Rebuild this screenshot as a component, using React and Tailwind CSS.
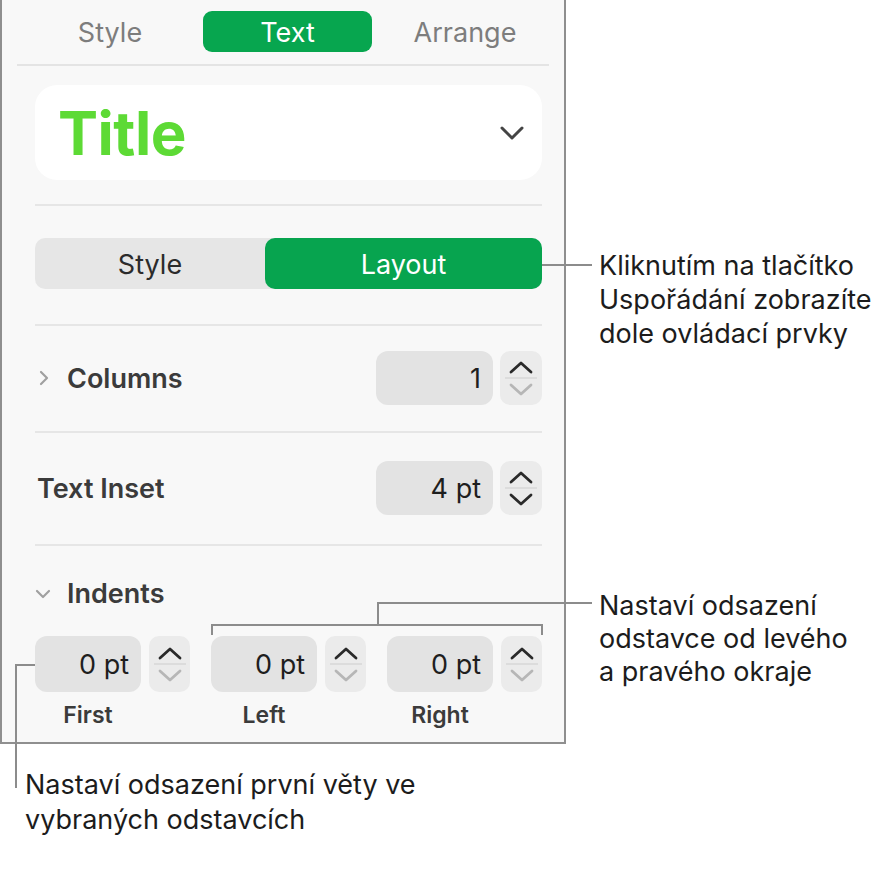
import React from "react";

const font = { fontFamily: "Inter, 'Noto Sans', sans-serif" };

function Chevron({ dir = "up", color = "#333", w = 22, h = 12, sw = 2.6 }) {
    const d = dir === "up" ? `M2 ${h - 2} L${w / 2} 2 L${w - 2} ${h - 2}` : `M2 2 L${w / 2} ${h - 2} L${w - 2} 2`;
    return (
        <svg width={w} height={h} viewBox={`0 0 ${w} ${h}`} fill="none">
            <path d={d} stroke={color} strokeWidth={sw} strokeLinecap="round" strokeLinejoin="round" />
        </svg>
    );
}

function Stepper({ downDisabled, w = "w-[42px]", h = "h-[54px]" }) {
    return (
        <div className={`${w} ${h} bg-[#ebebeb] rounded-[10px] flex flex-col items-center justify-center`}>
            <div className="h-[22px] flex items-end pb-[3px]">
                <Chevron dir="up" color="#2a2a2a" w={24} h={13} sw={2.8} />
            </div>
            <div className="w-[32px] h-[2px] bg-[#dcdcdc]" />
            <div className="h-[22px] flex items-start pt-[4px]">
                <Chevron dir="down" color={downDisabled ? "#b6b6b6" : "#2a2a2a"} w={24} h={13} sw={2.8} />
            </div>
        </div>
    );
}

function Field({ value, w = "w-[117px]", h = "h-[54px]" }) {
    return (
        <div className={`${w} ${h} bg-[#e3e3e3] rounded-[12px] flex items-center justify-end pr-[12px] pt-[2px] text-[27px] leading-[34px] text-[#1e1e1e]`}>
            {value}
        </div>
    );
}

function Sep() {
    return <div className="h-[2px] bg-[#e6e6e6]" />;
}

export default function App() {
    return (
        <div className="relative w-[892px] h-[873px] bg-white overflow-hidden" style={font}>
            {/* inspector panel */}
            <div className="w-[566px] h-[744px] bg-[#f8f8f8] border-l-2 border-r-2 border-b-2 border-[#8f8f8f] pl-[33px] pr-[22px]">
                {/* top tabs */}
                <div className="-ml-[35px] -mr-[24px] pt-[11px]">
                    <div className="h-[41px] flex items-center pl-[25px] text-[27px] leading-[34px]">
                        <div className="w-[170px] pt-[2px] text-center text-[#7d7d7d]">Style</div>
                        <div className="ml-[8px] w-[169px] h-[41px] pt-[2px] rounded-[9px] bg-[#07a64f] text-white flex items-center justify-center">Text</div>
                        <div className="w-[186px] pt-[2px] text-center text-[#7d7d7d]">Arrange</div>
                    </div>
                    <div className="mt-[12px] mx-[17px] h-[2px] bg-[#e4e4e4]" />
                </div>

                {/* paragraph style */}
                <div className="mt-[19px] h-[95px] bg-white rounded-[22px] flex items-center justify-between pl-[23px] pr-[18px]">
                    <span className="text-[60px] font-bold text-[#5dda35] tracking-[-0.5px] leading-none">Title</span>
                    <Chevron dir="down" color="#444" w={24} h={14} sw={3} />
                </div>

                <div className="mt-[24px]"><Sep /></div>

                {/* style / layout segment */}
                <div className="mt-[32px] h-[51px] bg-[#e6e6e6] rounded-[10px] flex text-[27px] leading-[34px]">
                    <div className="w-[230px] pt-[2px] flex items-center justify-center text-[#2b2b2b]">Style</div>
                    <div className="flex-1 pt-[2px] bg-[#07a44f] rounded-[10px] flex items-center justify-center text-white">Layout</div>
                </div>

                <div className="mt-[35px]"><Sep /></div>

                {/* columns */}
                <div className="mt-[25px] flex items-center">
                    <svg width="12" height="18" viewBox="0 0 12 18" fill="none" className="ml-[3px]">
                        <path d="M3 3 L9 9 L3 15" stroke="#a0a0a0" strokeWidth="2.2" strokeLinecap="round" strokeLinejoin="round" />
                    </svg>
                    <span className="ml-[17px] pt-[2px] text-[27px] leading-[34px] font-semibold text-[#3b3b3b]">Columns</span>
                    <div className="ml-auto flex gap-[7px]">
                        <Field value="1" />
                        <Stepper downDisabled />
                    </div>
                </div>

                <div className="mt-[26px]"><Sep /></div>

                {/* text inset */}
                <div className="mt-[28px] flex items-center">
                    <span className="ml-[2px] pt-[2px] text-[27px] leading-[34px] font-semibold text-[#3b3b3b]">Text Inset</span>
                    <div className="ml-auto flex gap-[7px]">
                        <Field value="4 pt" />
                        <Stepper />
                    </div>
                </div>

                <div className="mt-[29px]"><Sep /></div>

                {/* indents */}
                <div className="mt-[33px] h-[30px] flex items-center">
                    <svg width="18" height="12" viewBox="0 0 18 12" fill="none" className="-ml-[1px]">
                        <path d="M3 3 L9 9 L15 3" stroke="#a0a0a0" strokeWidth="2.2" strokeLinecap="round" strokeLinejoin="round" />
                    </svg>
                    <span className="ml-[15px] text-[27px] leading-[34px] font-semibold text-[#3b3b3b]">Indents</span>
                </div>

                <div className="mt-[27px] flex gap-[21px]">
                    {["First", "Left", "Right"].map((label) => (
                        <div key={label} className="flex flex-col">
                            <div className="flex gap-[8px]">
                                <Field value="0 pt" w="w-[106px]" h="h-[56px]" />
                                <Stepper downDisabled w="w-[41px]" h="h-[56px]" />
                            </div>
                            <div className="w-[106px] mt-[11px] text-center text-[23px] font-semibold text-[#3b3b3b] leading-[24px]">{label}</div>
                        </div>
                    ))}
                </div>
            </div>

            {/* callout: layout button */}
            <div className="absolute left-[542px] top-[264px] w-[50px] h-[2px] bg-[#8c8c8c]" />
            <div className="absolute left-[599px] top-[249px] text-[27px] leading-[34px] text-[#1c1c1c]">
                <div>Kliknutím na tlačítko</div>
                <div>Uspořádání zobrazíte</div>
                <div>dole ovládací prvky</div>
            </div>

            {/* callout: left/right indents bracket */}
            <div className="absolute left-[211px] top-[624px] w-[332px] h-[11px] border-t-2 border-l-2 border-r-2 border-[#8c8c8c]" />
            <div className="absolute left-[377px] top-[602px] w-[2px] h-[23px] bg-[#8c8c8c]" />
            <div className="absolute left-[377px] top-[602px] w-[215px] h-[2px] bg-[#8c8c8c]" />
            <div className="absolute left-[599px] top-[589px] text-[27px] leading-[33px] text-[#1c1c1c]">
                <div>Nastaví odsazení</div>
                <div>odstavce od levého</div>
                <div>a pravého okraje</div>
            </div>

            {/* callout: first line indent */}
            <div className="absolute left-[15px] top-[664px] w-[20px] h-[2px] bg-[#8c8c8c]" />
            <div className="absolute left-[15px] top-[664px] w-[2px] h-[124px] bg-[#8c8c8c]" />
            <div className="absolute left-[25px] top-[767px] text-[27px] leading-[35px] text-[#1c1c1c]">
                <div>Nastaví odsazení první věty ve</div>
                <div>vybraných odstavcích</div>
            </div>
        </div>
    );
}
